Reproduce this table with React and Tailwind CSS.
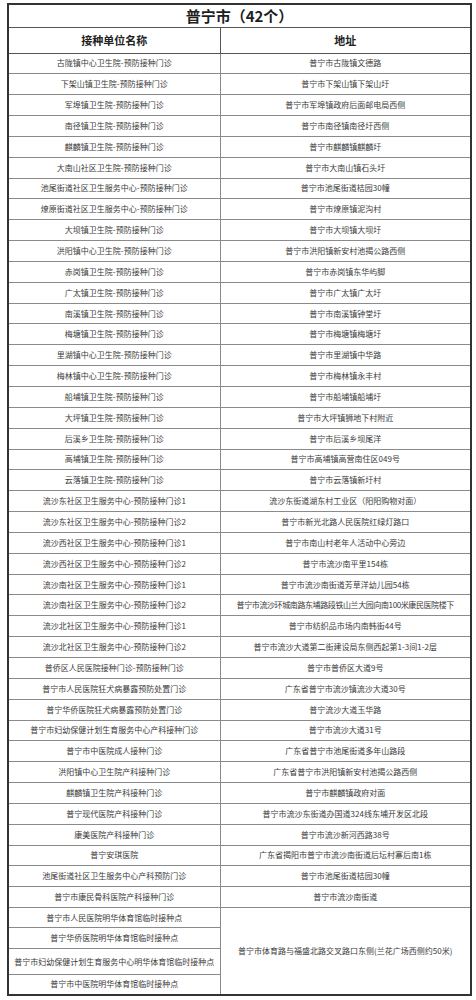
import React from 'react';

const rows = [
    ['古陇镇中心卫生院-预防接种门诊', '普宁市古陇镇文德路'],
    ['下架山镇卫生院-预防接种门诊', '普宁市下架山镇下架山圩'],
    ['军埠镇卫生院-预防接种门诊', '普宁市军埠镇政府后面邮电局西侧'],
    ['南径镇卫生院-预防接种门诊', '普宁市南径镇南径圩西侧'],
    ['麒麟镇卫生院-预防接种门诊', '普宁市麒麟镇麒麟圩'],
    ['大南山社区卫生院-预防接种门诊', '普宁市大南山镇石头圩'],
    ['池尾街道社区卫生服务中心-预防接种门诊', '普宁市池尾街道桔园30幢'],
    ['燎原街道社区卫生服务中心-预防接种门诊', '普宁市燎原镇泥沟村'],
    ['大坝镇卫生院-预防接种门诊', '普宁市大坝镇大坝圩'],
    ['洪阳镇中心卫生院-预防接种门诊', '普宁市洪阳镇新安村池揭公路西侧'],
    ['赤岗镇卫生院-预防接种门诊', '普宁市赤岗镇东华屿脚'],
    ['广太镇卫生院-预防接种门诊', '普宁市广太镇广太圩'],
    ['南溪镇卫生院-预防接种门诊', '普宁市南溪镇钟堂圩'],
    ['梅塘镇卫生院-预防接种门诊', '普宁市梅塘镇梅塘圩'],
    ['里湖镇中心卫生院-预防接种门诊', '普宁市里湖镇中华路'],
    ['梅林镇中心卫生院-预防接种门诊', '普宁市梅林镇永丰村'],
    ['船埔镇卫生院-预防接种门诊', '普宁市船埔镇船埔圩'],
    ['大坪镇卫生院-预防接种门诊', '普宁市大坪镇狮地下村附近'],
    ['后溪乡卫生院-预防接种门诊', '普宁市后溪乡坝尾洋'],
    ['高埔镇卫生院-预防接种门诊', '普宁市高埔镇高营南住区049号'],
    ['云落镇卫生院-预防接种门诊', '普宁市云落镇新圩村'],
    ['流沙东社区卫生服务中心-预防接种门诊1', '流沙东街道湖东村工业区（阳阳购物对面）'],
    ['流沙东社区卫生服务中心-预防接种门诊2', '普宁市新光北路人民医院红绿灯路口'],
    ['流沙西社区卫生服务中心-预防接种门诊1', '普宁市南山村老年人活动中心旁边'],
    ['流沙西社区卫生服务中心-预防接种门诊2', '普宁市流沙南平里154栋'],
    ['流沙南社区卫生服务中心-预防接种门诊1', '普宁市流沙南街道芳草洋幼儿园54栋'],
    ['流沙南社区卫生服务中心-预防接种门诊2', '普宁市流沙环城南路东埔路段铁山兰大园向南100米康民医院楼下'],
    ['流沙北社区卫生服务中心-预防接种门诊1', '普宁市纺织品市场内南韩街44号'],
    ['流沙北社区卫生服务中心-预防接种门诊2', '普宁市流沙大道第二街建设局东侧西起第1-3间1-2层'],
    ['普侨区人民医院接种门诊-预防接种门诊', '普宁市普侨区大道9号'],
    ['普宁市人民医院狂犬病暴露预防处置门诊', '广东省普宁市流沙镇流沙大道30号'],
    ['普宁华侨医院狂犬病暴露预防处置门诊', '普宁流沙大道玉华路'],
    ['普宁市妇幼保健计划生育服务中心产科接种门诊', '普宁市流沙大道31号'],
    ['普宁市中医院成人接种门诊', '广东省普宁市池尾街道多年山路段'],
    ['洪阳镇中心卫生院产科接种门诊', '广东省普宁市洪阳镇新安村池揭公路西侧'],
    ['麒麟镇卫生院产科接种门诊', '普宁市麒麟镇政府对面'],
    ['普宁现代医院产科接种门诊', '普宁市流沙东街道办国道324线东埔开发区北段'],
    ['康美医院产科接种门诊', '普宁市流沙新河西路38号'],
    ['普宁安琪医院', '广东省揭阳市普宁市流沙南街道后坛村寨后南1栋'],
    ['池尾街道社区卫生服务中心产科预防门诊', '普宁市池尾街道桔园30幢'],
    ['普宁市康民骨科医院产科接种门诊', '普宁市流沙南街道'],
];

const cell = 'border border-[#8a8a8a] text-center whitespace-nowrap p-0 text-[8px] leading-none text-[#3a3a3a]';

const App = () => {
    return (
        <div className="w-[476px] h-[1000px] bg-white pt-[3px] pl-[7px]" style={{ fontFamily: '"Noto Sans CJK SC", "Noto Sans", sans-serif' }}>
            <table className="table-fixed border-collapse border-2 border-[#333] w-[463px]">
                <colgroup>
                    <col className="w-[212px]" />
                    <col className="w-[251px]" />
                </colgroup>
                <tbody>
                    <tr className="h-[23px]">
                        <td colSpan={2} className="border border-[#555] text-center text-[15px] leading-none font-bold text-[#1f1f1f] p-0">
                            普宁市（42个）
                        </td>
                    </tr>
                    <tr className="h-[26px]">
                        <td className="border border-[#555] text-center text-[11px] leading-none font-bold text-[#222] p-0">接种单位名称</td>
                        <td className="border border-[#555] text-center text-[11px] leading-none font-bold text-[#222] p-0">地址</td>
                    </tr>
                    {rows.map(([name, addr], i) => (
                        <tr key={i} className="h-[20.85px]">
                            <td className={cell}>{name}</td>
                            <td className={i === 26 ? cell + ' tracking-[-0.4px]' : cell}>{addr}</td>
                        </tr>
                    ))}
                    <tr className="h-[20px]">
                        <td className={cell}>普宁市人民医院明华体育馆临时接种点</td>
                        <td rowSpan={4} className={cell}>普宁市体育路与福盛北路交叉路口东侧(兰花广场西侧约50米)</td>
                    </tr>
                    <tr className="h-[21px]">
                        <td className={cell}>普宁华侨医院明华体育馆临时接种点</td>
                    </tr>
                    <tr className="h-[26px]">
                        <td className={cell}>普宁市妇幼保健计划生育服务中心明华体育馆临时接种点</td>
                    </tr>
                    <tr className="h-[20px]">
                        <td className={cell}>普宁市中医院明华体育馆临时接种点</td>
                    </tr>
                </tbody>
            </table>
        </div>
    );
};

export default App;
